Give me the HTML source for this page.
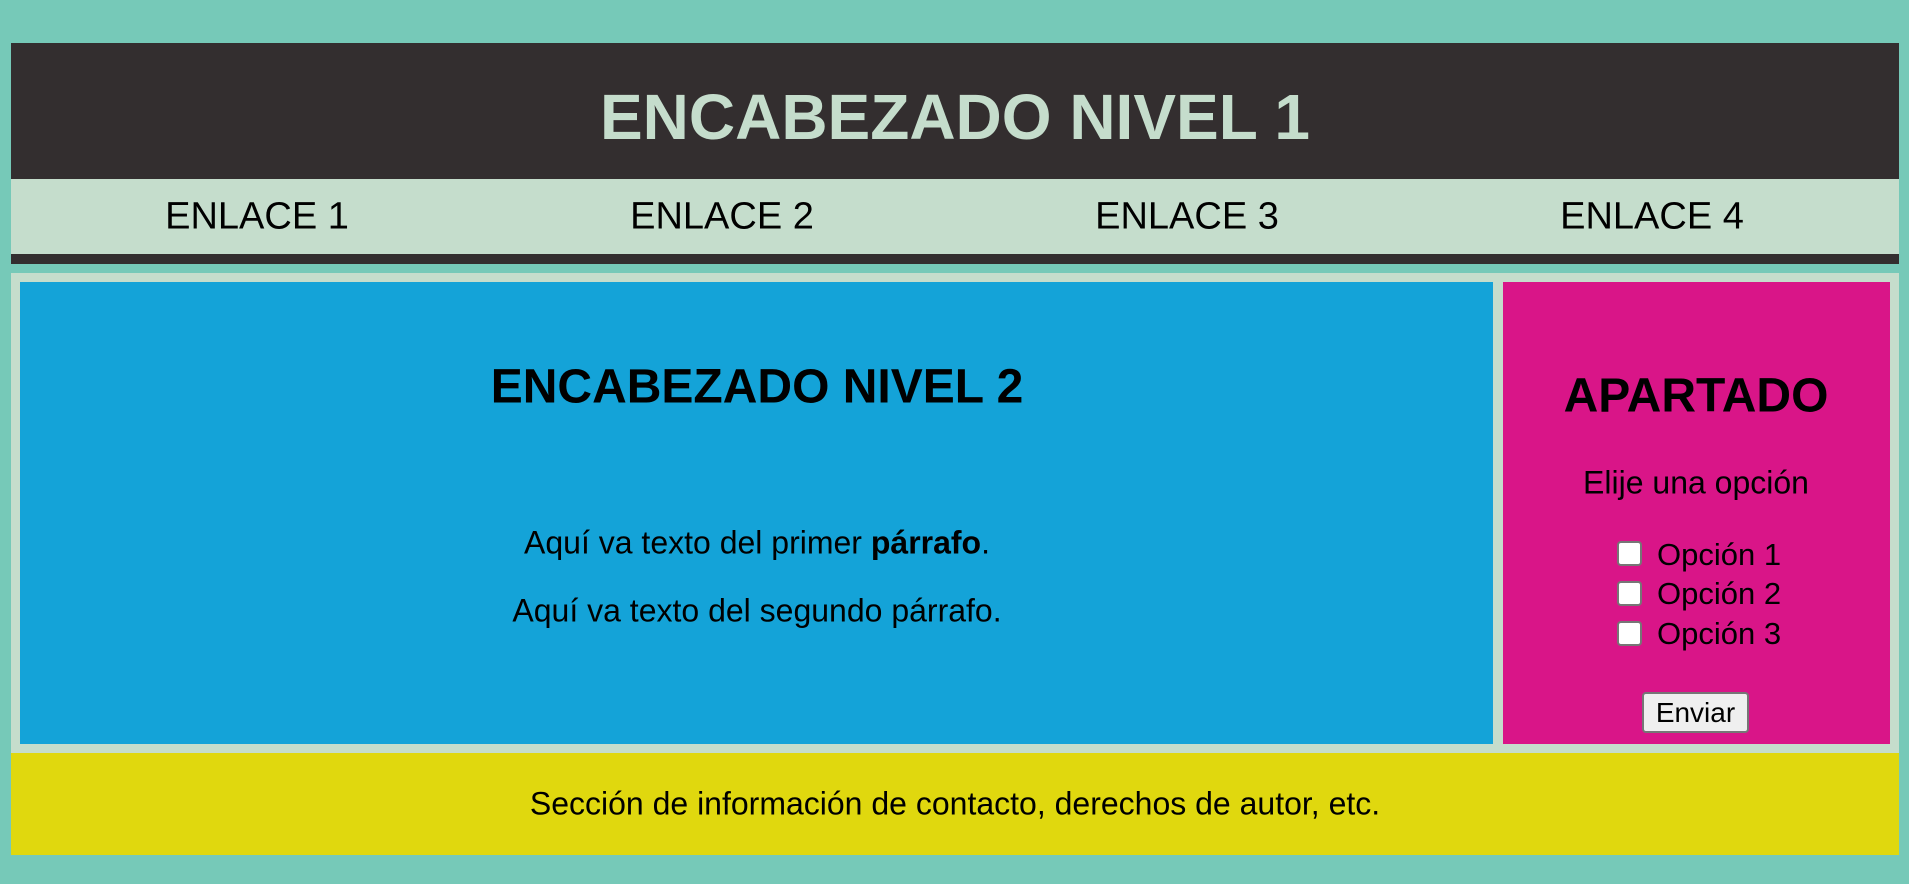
<!DOCTYPE html>
<html><head><meta charset="utf-8"><style>
*{margin:0;padding:0;box-sizing:border-box}
body{width:1909px;height:884px;background:#76c9b8;font-family:"Liberation Sans",Arial,sans-serif;position:relative;overflow:hidden}
.a{position:absolute}
.c{position:absolute;transform:translate(-50%,-50%);white-space:nowrap}
.cb{position:absolute;width:25px;height:25px;background:#fff;border:2px solid #767676;border-radius:4px;left:1617px}
.op{position:absolute;left:1657px;font-size:31px;transform:translateY(-50%)}
</style></head><body>
<div class="a" style="left:11px;top:43px;width:1888px;height:136px;background:#332e2f"></div>
<div class="c" style="left:955px;top:117px;font-size:64px;font-weight:bold;color:#c5ddcc">ENCABEZADO NIVEL 1</div>
<div class="a" style="left:11px;top:179px;width:1888px;height:75px;background:#c5ddcc"></div>
<div class="a" style="left:11px;top:254px;width:1888px;height:10px;background:#332e2f"></div>
<div class="c" style="left:257px;top:217px;font-size:38px">ENLACE 1</div>
<div class="c" style="left:722px;top:217px;font-size:38px">ENLACE 2</div>
<div class="c" style="left:1187px;top:217px;font-size:38px">ENLACE 3</div>
<div class="c" style="left:1652px;top:217px;font-size:38px">ENLACE 4</div>
<div class="a" style="left:11px;top:273px;width:1888px;height:480px;background:#c5ddcc"></div>
<div class="a" style="left:20px;top:282px;width:1473px;height:462px;background:#14a3d8"></div>
<div class="a" style="left:1503px;top:282px;width:387px;height:462px;background:#d91588"></div>
<div class="c" style="left:757px;top:387px;font-size:48px;font-weight:bold">ENCABEZADO NIVEL 2</div>
<div class="c" style="left:757px;top:543px;font-size:32px">Aquí va texto del primer <b>párrafo</b>.</div>
<div class="c" style="left:757px;top:611px;font-size:32px">Aquí va texto del segundo párrafo.</div>
<div class="c" style="left:1696px;top:396px;font-size:48px;font-weight:bold">APARTADO</div>
<div class="c" style="left:1696px;top:483px;font-size:32px">Elije una opción</div>
<div class="cb" style="top:541px"></div><div class="op" style="top:555px">Opción 1</div>
<div class="cb" style="top:581px"></div><div class="op" style="top:594px">Opción 2</div>
<div class="cb" style="top:621px"></div><div class="op" style="top:634px">Opción 3</div>
<div class="a" style="left:1642px;top:692px;width:107px;height:41px;background:#efefef;border:2px solid #767676;border-radius:4px;font-size:28px;text-align:center;line-height:37px">Enviar</div>
<div class="a" style="left:11px;top:753px;width:1888px;height:102px;background:#e0d80e"></div>
<div class="c" style="left:955px;top:804px;font-size:32px">Sección de información de contacto, derechos de autor, etc.</div>
</body></html>
